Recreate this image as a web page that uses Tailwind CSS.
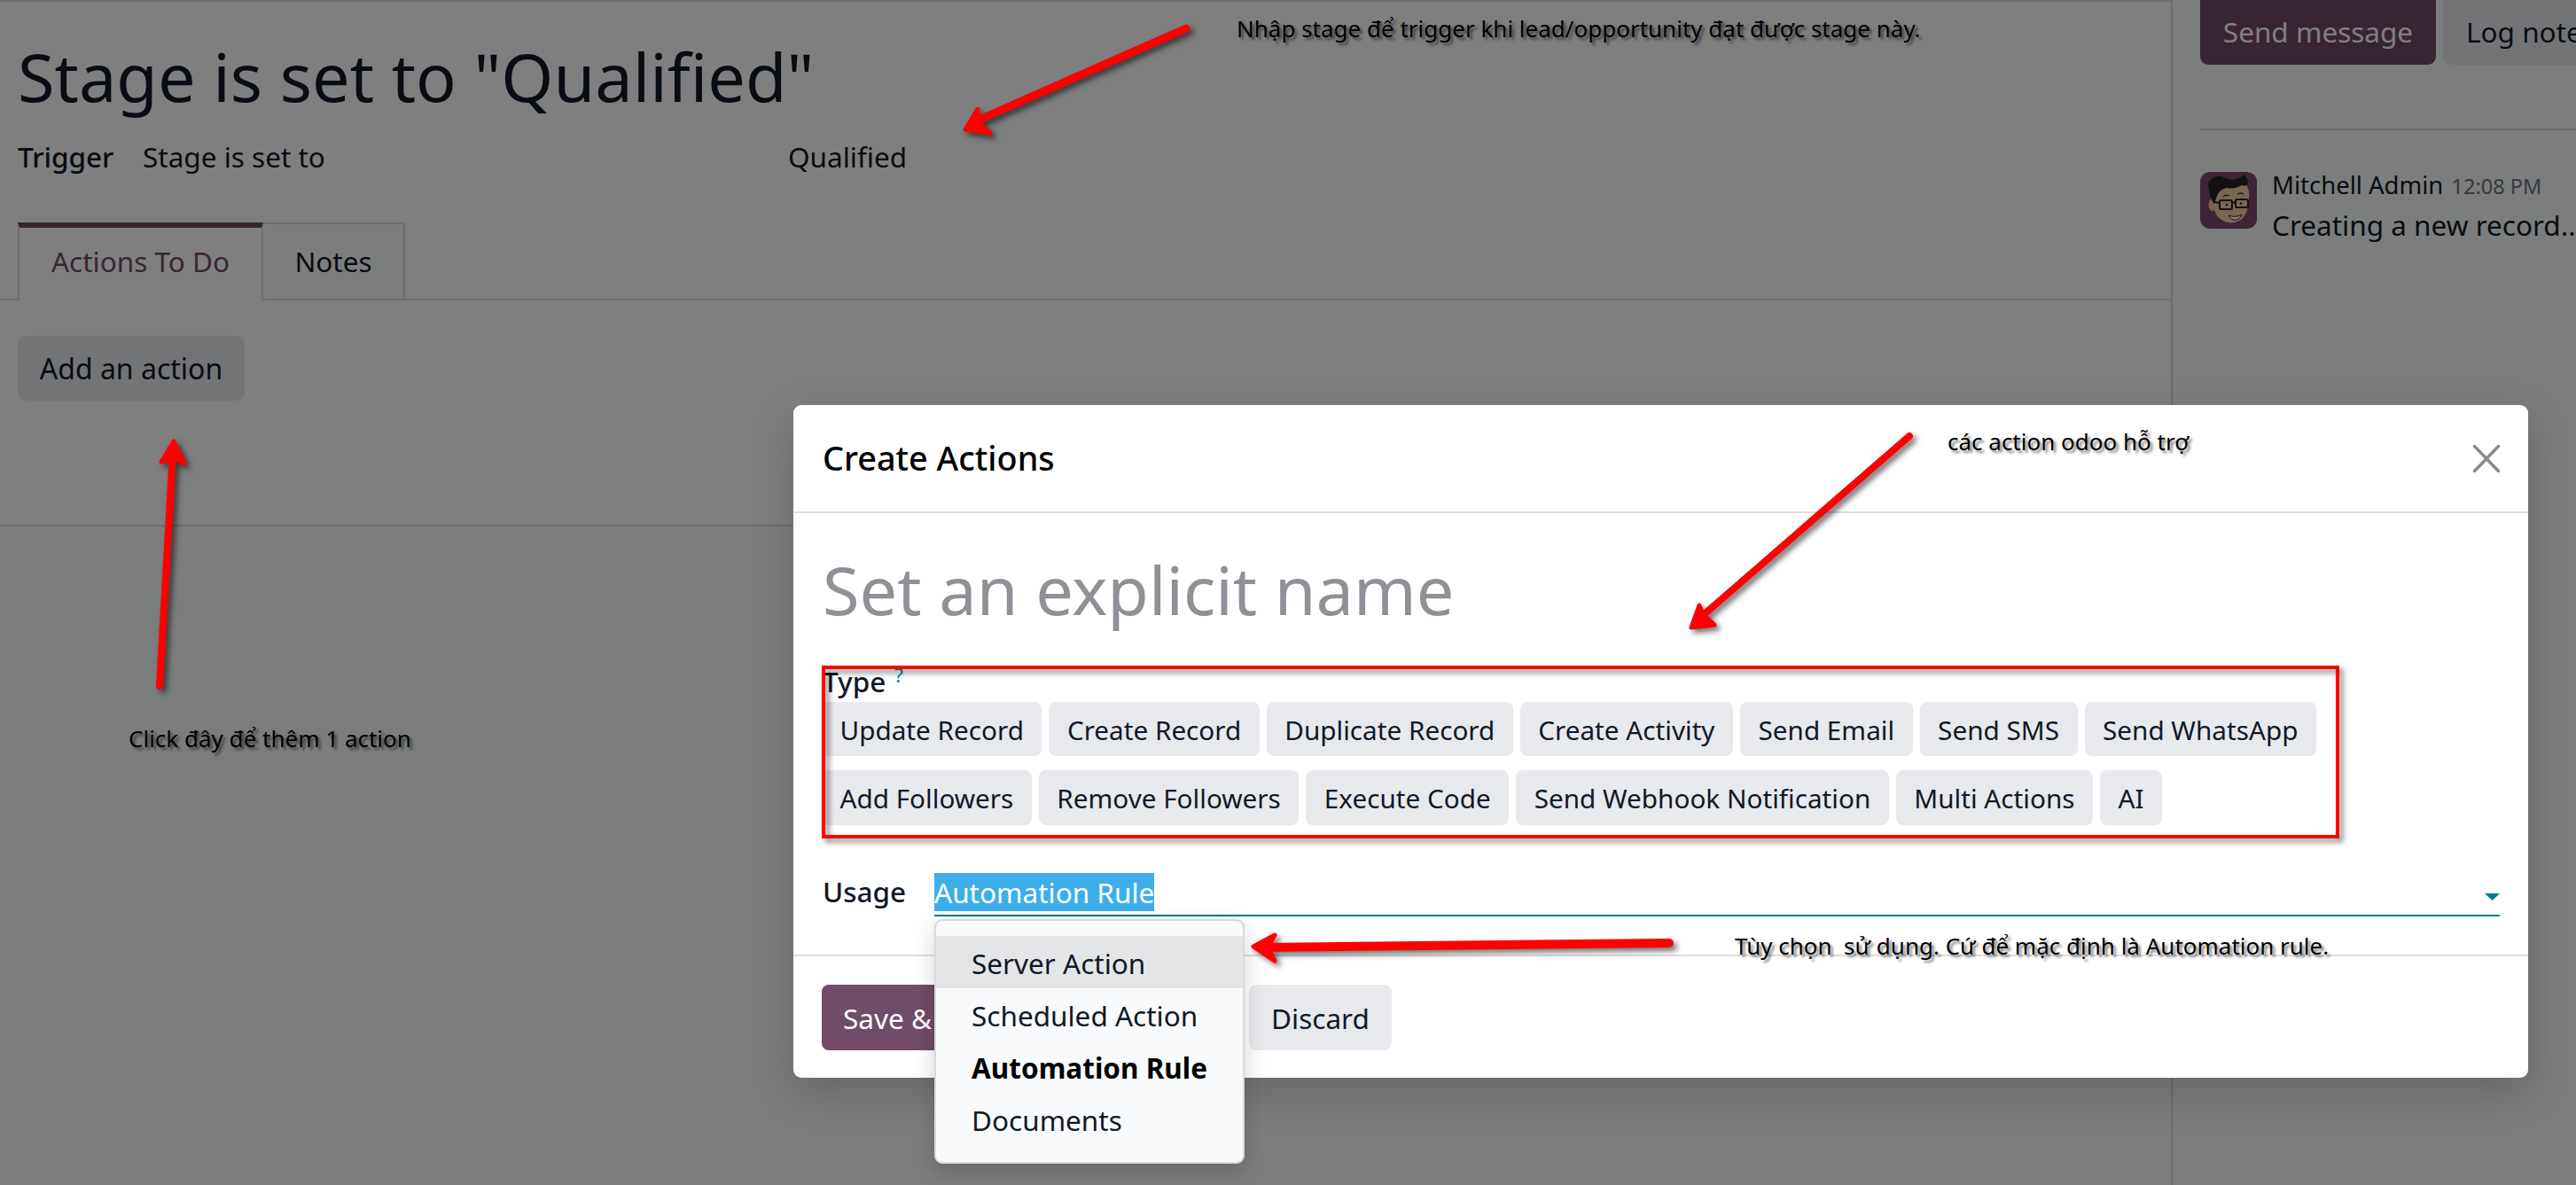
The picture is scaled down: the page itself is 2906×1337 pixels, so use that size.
<!DOCTYPE html>
<html lang="en">
<head>
    <meta charset="UTF-8">
    <title>Automation Rule - Create Actions</title>
    <script src="https://cdn.jsdelivr.net/npm/@tailwindcss/browser@4"></script>
</head>
<body class="relative w-[2906px] h-[1337px] overflow-hidden bg-[#f9fafb] text-[31.5px] text-[#111827] font-['Noto_Sans',sans-serif]">

    <!-- Page behind the dialog -->
    <div class="flex h-full">
        <div class="w-[2451px] h-full border-r-2 border-[#d8dadd]">
            <div class="h-[594px] bg-white border-t-2 border-b-2 border-[#d8dadd] pl-[20px]">
                <h1 class="pt-[34px] text-[75.7px] leading-[100px]">Stage is set to "Qualified"</h1>
                <div class="flex mt-[20px] leading-[42px]">
                    <span class="w-[141px] font-medium">Trigger</span>
                    <span class="w-[728px]">Stage is set to</span>
                    <span>Qualified</span>
                </div>
                <div class="flex h-[88px] mt-[53px] -ml-[20px] pl-[20px] border-b-2 border-[#d8dadd]">
                    <div class="w-[277px] h-[88px] pb-[6px] flex items-center justify-center bg-white border-t-[6px] border-t-[#714b67] border-x-2 border-x-[#d8dadd] text-[#714b67]">Actions To Do</div>
                    <div class="w-[160px] h-[86px] flex items-center justify-center bg-[#f9fafb] border-t-2 border-r-2 border-[#d8dadd]">Notes</div>
                </div>
                <button class="mt-[40px] w-[256px] h-[73px] rounded-[9px] bg-[#e7e9ed] text-[32px] text-[#111827]">Add an action</button>
            </div>
        </div>
        <div class="flex-1 pl-[31px] min-w-0 overflow-hidden">
            <div class="flex gap-[8px] h-[73px]">
                <button class="w-[266px] shrink-0 pb-[2px] rounded-b-[9px] bg-[#714b67] text-white">Send message</button>
                <button class="shrink-0 px-[26px] pb-[2px] rounded-b-[9px] bg-[#e7e9ed] whitespace-nowrap">Log note</button>
            </div>
            <div class="mt-[72px] border-t-2 border-[#d8dadd]"></div>
            <div class="flex gap-[17px] mt-[47px]">
                <svg class="w-[64px] h-[64px] shrink-0" viewBox="0 0 64 64">
                    <rect width="64" height="64" rx="11" fill="#7a4a6c"/>
                    <ellipse cx="14" cy="37" rx="4.5" ry="7" fill="#e9c49f"/>
                    <path d="M15 28Q13 50 28 56Q38 60 47 53Q56 45 55 22L52 14L20 18Z" fill="#f3cfa8"/>
                    <path d="M9 12Q16 3 24 5Q30 8 36 9Q44 8 50 3Q54 8 54 13Q52 17 47 15Q38 20 30 18Q22 20 20 25Q18 30 16 36Q10 30 9 12Z" fill="#242424"/>
                    <rect x="22" y="32" width="14" height="10" rx="1.5" fill="none" stroke="#222" stroke-width="2"/>
                    <rect x="40" y="31" width="14" height="9" rx="1.5" fill="none" stroke="#222" stroke-width="2"/>
                    <path d="M36 35L40 34M22 35L16 34" stroke="#222" stroke-width="2"/>
                    <circle cx="30" cy="37" r="1.3" fill="#222"/>
                    <circle cx="46" cy="35.5" r="1.3" fill="#222"/>
                    <path d="M26 28Q29 25 33 27M42 25Q46 23 49 25" fill="none" stroke="#333" stroke-width="1.3"/>
                    <path d="M32 49Q40 52 47 48Q44 55 38 54Q34 54 32 49Z" fill="#fff" stroke="#3a2a20" stroke-width="1"/>
                </svg>
                <div class="min-w-0 whitespace-nowrap -mt-[4px]">
                    <div class="leading-[34px]">
                        <span class="text-[27.5px]">Mitchell Admin</span>
                        <span class="ml-[1px] text-[23.5px] text-[#6b7280]">12:08 PM</span>
                    </div>
                    <div class="mt-[7px] leading-[40px]">Creating a new record...</div>
                </div>
            </div>
        </div>
    </div>

    <!-- Backdrop -->
    <div class="absolute inset-0 bg-black/50"></div>

    <!-- Dialog -->
    <div class="absolute left-[895px] top-[457px] w-[1957px] h-[759px] bg-white rounded-[9px] shadow-[0_16px_48px_rgba(0,0,0,0.18)]">
        <div class="flex items-center justify-between h-[122px] pl-[33px] pr-[32px] border-b-2 border-[#dedee2]">
            <h4 class="text-[37.8px] font-medium text-black">Create Actions</h4>
            <svg class="w-[30px] h-[31px]" viewBox="0 0 30 31"><path d="M1.5 1.5L28.5 29.5M28.5 1.5L1.5 29.5" stroke="#8a8a8a" stroke-width="3.5" stroke-linecap="round"/></svg>
        </div>
        <div class="h-[498px] px-[32px] pt-[36px]">
            <div class="pl-[1px] text-[75.7px] leading-[100px] text-[#8f9199]">Set an explicit name</div>
            <div class="pl-[1px] mt-[34px] leading-[40px] font-medium">Type<sup class="ml-[10px] text-[22px] font-normal text-[#0180a5]">?</sup></div>
            <div class="flex flex-wrap gap-x-[8px] gap-y-[16px] mt-[3px] text-[29.7px]">
                <span class="h-[61px] leading-[63px] px-[20.5px] rounded-[8px] bg-[#e7e9ed]">Update Record</span>
                <span class="h-[61px] leading-[63px] px-[20.5px] rounded-[8px] bg-[#e7e9ed]">Create Record</span>
                <span class="h-[61px] leading-[63px] px-[20.5px] rounded-[8px] bg-[#e7e9ed]">Duplicate Record</span>
                <span class="h-[61px] leading-[63px] px-[20.5px] rounded-[8px] bg-[#e7e9ed]">Create Activity</span>
                <span class="h-[61px] leading-[63px] px-[20.5px] rounded-[8px] bg-[#e7e9ed]">Send Email</span>
                <span class="h-[61px] leading-[63px] px-[20.5px] rounded-[8px] bg-[#e7e9ed]">Send SMS</span>
                <span class="h-[61px] leading-[63px] px-[20.5px] rounded-[8px] bg-[#e7e9ed]">Send WhatsApp</span>
                <span class="h-[62px] leading-[63px] px-[20.5px] rounded-[8px] bg-[#e7e9ed]">Add Followers</span>
                <span class="h-[62px] leading-[63px] px-[20.5px] rounded-[8px] bg-[#e7e9ed]">Remove Followers</span>
                <span class="h-[62px] leading-[63px] px-[20.5px] rounded-[8px] bg-[#e7e9ed]">Execute Code</span>
                <span class="h-[62px] leading-[63px] px-[20.5px] rounded-[8px] bg-[#e7e9ed]">Send Webhook Notification</span>
                <span class="h-[62px] leading-[63px] px-[20.5px] rounded-[8px] bg-[#e7e9ed]">Multi Actions</span>
                <span class="h-[62px] leading-[63px] px-[20.5px] rounded-[8px] bg-[#e7e9ed]">AI</span>
            </div>
            <div class="flex mt-[54px]">
                <span class="w-[127px] pl-[1px] leading-[42px] font-medium">Usage</span>
                <div class="flex-1 flex justify-between h-[49px] border-b-2 border-[#017e84]">
                    <span class="h-[43px] leading-[44px] bg-[#3daee9] text-white">Automation Rule</span>
                    <svg class="w-[17px] h-[8px] mt-[23px]" viewBox="0 0 17 8"><path d="M0 0H17L8.5 8Z" fill="#017e84"/></svg>
                </div>
            </div>
        </div>
        <div class="flex gap-[8px] h-[137px] px-[32px] pt-[32px] border-t-2 border-[#dedee2]">
            <button class="w-[474px] h-[74px] pt-[2px] rounded-[8px] bg-[#714b67] text-white text-left pl-[24px]">Save &amp;</button>
            <button class="w-[161px] h-[74px] pt-[2px] rounded-[8px] bg-[#e7e9ed]">Discard</button>
        </div>
    </div>

    <!-- Usage dropdown -->
    <ul class="absolute left-[1054px] top-[1037px] w-[350px] h-[276px] py-[17px] bg-[#f9fafb] border-2 border-[#d8dadd] rounded-[9px] shadow-[0_8px_24px_rgba(0,0,0,0.18)]">
        <li class="h-[59px] leading-[61px] px-[40px] bg-[#e4e5e7]">Server Action</li>
        <li class="h-[59px] leading-[61px] px-[40px]">Scheduled Action</li>
        <li class="h-[59px] leading-[61px] px-[40px] font-bold text-black">Automation Rule</li>
        <li class="h-[59px] leading-[61px] px-[40px]">Documents</li>
    </ul>

    <!-- Red markup drawn over the screenshot -->
    <svg class="absolute inset-0 w-full h-full drop-shadow-[4px_4px_3px_rgba(0,0,0,0.55)]" viewBox="0 0 2906 1337" fill="none" stroke="#ff0000" stroke-linecap="round" stroke-linejoin="round">
        <rect x="929" y="753" width="1708" height="191" stroke-width="4" stroke-linecap="butt" stroke-linejoin="miter"/>
        <path d="M1338 32L1098 138" stroke-width="9"/>
        <path d="M1103 123L1089 146L1117 150L1104 138Z" fill="#ff0000" stroke-width="5"/>
        <path d="M180 774L195 510" stroke-width="8"/>
        <path d="M182 521L196 498L208 523L195 517Z" fill="#ff0000" stroke-width="5"/>
        <path d="M2154 492L1918 697" stroke-width="8"/>
        <path d="M1917 683L1908 708L1934 705L1922 694Z" fill="#ff0000" stroke-width="5"/>
        <path d="M1883 1064L1425 1069" stroke-width="10"/>
        <path d="M1438 1055L1414 1068L1438 1084L1430 1069Z" fill="#ff0000" stroke-width="5"/>
    </svg>

    <!-- Notes drawn over the screenshot -->
    <span class="absolute left-[1395px] top-[14px] text-[26px] leading-[36px] text-black whitespace-nowrap [text-shadow:3px_3px_3px_rgba(0,0,0,0.5)]">Nhập stage để trigger khi lead/opportunity đạt được stage này.</span>
    <span class="absolute left-[2197px] top-[480px] text-[26px] leading-[36px] text-black whitespace-nowrap [text-shadow:3px_3px_3px_rgba(0,0,0,0.5)]">các action odoo hỗ trợ</span>
    <span class="absolute left-[1957px] top-[1049px] text-[26px] leading-[36px] text-black whitespace-pre [text-shadow:3px_3px_3px_rgba(0,0,0,0.5)]">Tùy chọn  sử dụng. Cứ để mặc định là Automation rule.</span>
    <span class="absolute left-[145px] top-[815px] text-[26px] leading-[36px] text-black whitespace-nowrap [text-shadow:3px_3px_3px_rgba(0,0,0,0.5)]">Click đây để thêm 1 action</span>
</body>
</html>
